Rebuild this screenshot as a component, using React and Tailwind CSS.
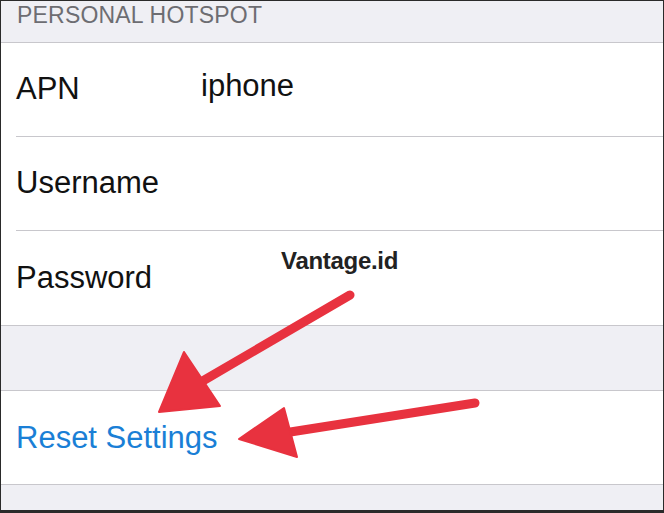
import React from "react";

const Row = ({ label, value, last }) => (
  <div className="flex h-[94px] pl-[15px]">
    <div
      className={`flex flex-1 items-center ${
        last ? "" : "border-b border-[#c8c7cc]"
      }`}
    >
      <span className="w-[185px] text-[31px] text-[#111]">{label}</span>
      {value && (
        <span className="text-[31px] text-[#111] -mt-[6px]">{value}</span>
      )}
    </div>
  </div>
);

const Arrows = () => (
  <svg
    className="absolute inset-0 pointer-events-none"
    width="664"
    height="513"
    viewBox="0 0 664 513"
  >
    <g fill="#e8323f" stroke="#e8323f" strokeLinecap="round">
      <line x1="349" y1="294" x2="200" y2="381" strokeWidth="9" />
      <polygon points="158,411 183,351 219,405" strokeWidth="2" strokeLinejoin="round" />
      <line x1="474" y1="402" x2="283" y2="432" strokeWidth="9" />
      <polygon points="238,438 283,407 296,456" strokeWidth="2" strokeLinejoin="round" />
    </g>
  </svg>
);

export default function App() {
  return (
    <div
      className="relative w-[664px] h-[513px] overflow-hidden bg-[#efeff4] border-x border-t border-b-[3px] border-[#2a2a2a]"
      style={{ fontFamily: '"Liberation Sans", Arial, sans-serif' }}
    >
      <div className="h-[42px] border-b border-[#c8c7cc] px-[16px] flex items-center">
        <span className="text-[23px] text-[#6d6d72] tracking-[0.2px] -mt-[12px]">
          PERSONAL HOTSPOT
        </span>
      </div>
      <div className="bg-white border-b border-[#c8c7cc]">
        <Row label="APN" value="iphone" />
        <Row label="Username" />
        <Row label="Password" last />
      </div>
      <div className="h-[65px] border-b border-[#c8c7cc]" />
      <div className="bg-white h-[94px] border-b border-[#c8c7cc] flex items-center pl-[15px]">
        <span className="text-[31px] text-[#1a7fd6] mt-[2px]">Reset Settings</span>
      </div>

      <div className="absolute left-[280px] top-[242px] text-[24px] font-bold text-[#222] tracking-[-0.3px]">
        Vantage.id
      </div>
      <Arrows />
    </div>
  );
}
